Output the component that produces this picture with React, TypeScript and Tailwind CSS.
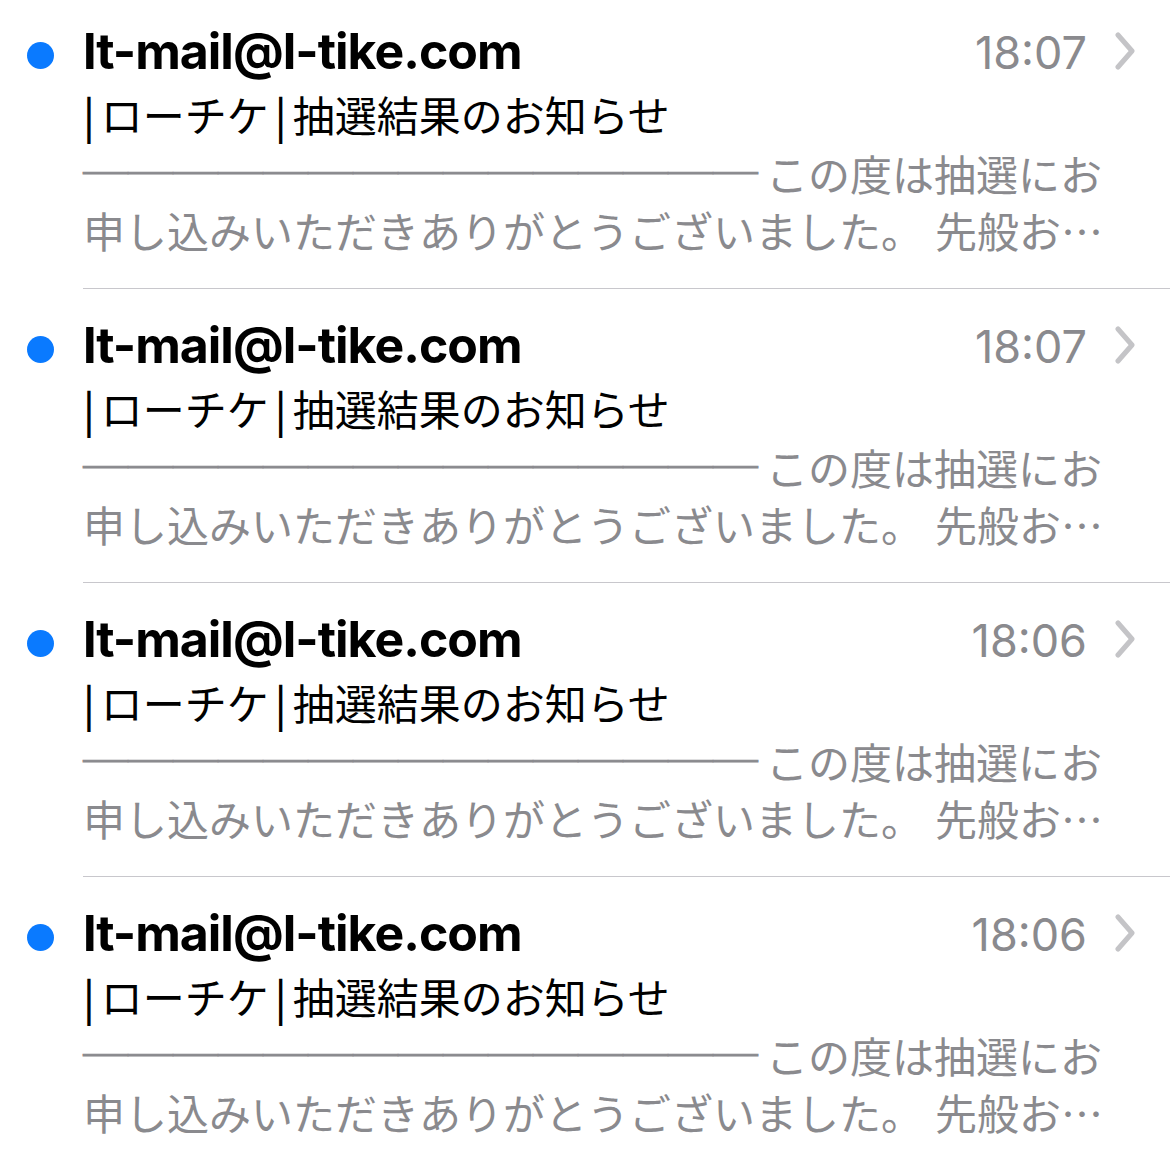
import React from "react";

const rows = [
  { time: "18:07" },
  { time: "18:07" },
  { time: "18:06" },
  { time: "18:06" },
];

const latin = { fontFamily: "Inter, 'Noto Sans CJK JP', sans-serif" };
const jp = { fontFamily: "'Noto Sans CJK JP', Inter, sans-serif" };

function Chevron() {
  return (
    <svg width="22" height="38" viewBox="0 0 22 38" className="block">
      <path
        d="M4 3 L18 19 L4 35"
        fill="none"
        stroke="#c4c4c7"
        strokeWidth="5"
        strokeLinecap="round"
        strokeLinejoin="round"
      />
    </svg>
  );
}

function Row({ time }: { time: string }) {
  return (
    <div className="flex">
      <div className="w-[83px] shrink-0 pl-[27px]">
        <div className="mt-[47px] w-[27px] h-[27px] rounded-full bg-[#0a7aff]" />
      </div>
      <div className="flex-1 min-w-0 border-b border-[#c8c7cc] pt-[26px] pb-[30px]">
        <div className="flex items-baseline h-[60px] leading-[60px]">
          <div className="flex-1 text-[50px] font-bold text-black tracking-[-1px]" style={latin}>
            lt-mail@l-tike.com
          </div>
          <div className="text-[45px] text-[#8a8a8e]" style={latin}>
            {time}
          </div>
          <div className="ml-[27px] mr-[34px] self-center">
            <Chevron />
          </div>
        </div>
        <div className="mt-[5px] h-[56px] leading-[56px] text-[42px] text-black whitespace-nowrap" style={jp}>
          <span className="mr-[6px] font-medium">|</span>ローチケ<span className="mx-[6px] font-medium">|</span>抽選結果のお知らせ
        </div>
        <div className="h-[59px] leading-[59px] text-[42px] text-[#8a8a8e] whitespace-nowrap" style={jp}>
          <span className="text-[45px] [-webkit-text-stroke:0.9px_#8a8a8e]">───────────────</span>
          <span className="ml-[8px]">この度は抽選にお</span>
        </div>
        <div className="h-[57px] leading-[57px] text-[42px] text-[#8a8a8e] whitespace-nowrap" style={jp}>
          申し込みいただきありがとうございました。<span className="ml-[12px]">先般お…</span>
        </div>
      </div>
    </div>
  );
}

export default function App() {
  return (
    <div className="w-[1170px] h-[1165px] overflow-hidden bg-white">
      <div className="-mt-[5px]">
        {rows.map((r, i) => (
          <Row key={i} time={r.time} />
        ))}
      </div>
    </div>
  );
}
